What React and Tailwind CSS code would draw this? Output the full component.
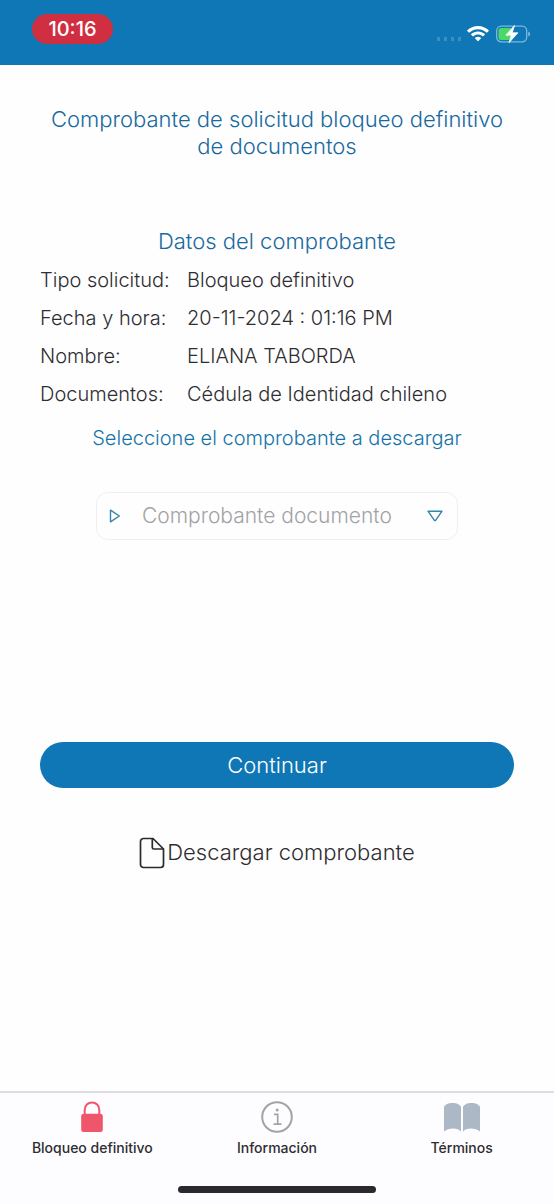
import { useState } from "react";

const details = [
  { label: "Tipo solicitud:", value: "Bloqueo definitivo" },
  { label: "Fecha y hora:", value: "20-11-2024 : 01:16 PM" },
  { label: "Nombre:", value: "ELIANA TABORDA" },
  { label: "Documentos:", value: "Cédula de Identidad chileno" },
];

const WifiIcon = () => (
  <svg viewBox="0 0 22 16" className="w-[22px] h-4" fill="#fff" aria-hidden="true">
    <path d="M11 0C6.900 0 3.100 1.600.3 4.300c-.2.2-.2.5 0 .7l1.500 1.500c.2.2.5.2.7 0C4.800 4.400 7.800 3.200 11 3.200s6.200 1.200 8.500 3.300c.2.2.5.2.7 0L21.700 5c.2-.2.2-.5 0-.7C18.900 1.600 15.100 0 11 0z" />
    <path d="M11 5.400c-2.600 0-5 1-6.800 2.600-.2.2-.2.5 0 .7l1.600 1.600c.2.2.5.2.7 0C7.700 9.200 9.300 8.600 11 8.600s3.300.6 4.500 1.700c.2.2.5.2.7 0l1.600-1.600c.2-.2.2-.5 0-.7C16 6.400 13.600 5.400 11 5.400z" />
    <path d="M11 10.700c-1.100 0-2.100.4-2.900 1-.2.2-.2.5 0 .7l2.500 2.700c.2.2.6.2.8 0l2.500-2.700c.2-.2.2-.5 0-.7-.8-.6-1.800-1-2.900-1z" />
  </svg>
);

const BatteryIcon = () => (
  <svg viewBox="0 0 36 20" className="w-9 h-5" aria-hidden="true">
    <rect x="1.700" y="2.200" width="30" height="15.600" rx="4.500" fill="none" stroke="#7db8dc" strokeWidth="1.300" />
    <rect x="3.500" y="4" width="13.500" height="12" rx="2.500" fill="#48d967" />
    <path d="M33.200 7.500c1.300.4 2 1.300 2 2.500s-.7 2.100-2 2.500z" fill="#7db8dc" />
    <path d="M19.500 1.500 10.800 11.200h5.600L14 18.700l8.900-9.900h-5.700z" fill="#fff" stroke="#fff" strokeWidth="0.800" strokeLinejoin="round" />
  </svg>
);

const FileIcon = () => (
  <svg viewBox="0 0 26 32" className="w-[26px] h-8" fill="none" stroke="#2b2a2d" strokeWidth="1.700" strokeLinejoin="round" aria-hidden="true">
    <path d="M4.500 1.500H14L24.500 12v15.500a3 3 0 0 1-3 3h-17a3 3 0 0 1-3-3v-23a3 3 0 0 1 3-3z" />
    <path d="M13.300 1.500v9a1.500 1.500 0 0 0 1.500 1.500h9.700" />
  </svg>
);

const LockIcon = () => (
  <svg viewBox="0 0 24 32" className="w-6 h-8" aria-hidden="true">
    <path d="M4.700 14V8.700a7.300 7.300 0 0 1 14.600 0V14" fill="none" stroke="#f0566b" strokeWidth="2" />
    <rect x="1.200" y="12.700" width="21.600" height="18.300" rx="2.500" fill="#f0566b" />
  </svg>
);

const InfoIcon = () => (
  <svg viewBox="0 0 32 32" className="w-8 h-8" fill="none" stroke="#a3a3a6" aria-hidden="true">
    <circle cx="16" cy="16" r="14.800" strokeWidth="2" />
    <path d="M13 13.300h3.700v9.400M12.500 23.200h8" strokeWidth="1.700" />
    <circle cx="16.200" cy="9" r="1.500" fill="#a3a3a6" stroke="none" />
  </svg>
);

const BookIcon = () => (
  <svg viewBox="0 0 36 32" className="w-9 h-8" fill="#acb8c6" aria-hidden="true">
    <path d="M0 6C1 3.500 4.500 2 8.500 2S16 3.500 17 6v24.500C15.500 28.500 12.500 27.500 9 27.500S2 28.500 0 30.500z" />
    <path d="M19 6c1-2.500 4.500-4 8.500-4S35 3.500 36 6v24.500c-2-2-5.500-3-9-3s-6.500 1-8 3z" />
  </svg>
);

const tabs = [
  { id: "bloqueo", label: "Bloqueo definitivo", Icon: LockIcon },
  { id: "informacion", label: "Información", Icon: InfoIcon },
  { id: "terminos", label: "Términos", Icon: BookIcon },
];

const StatusBar = () => (
  <header className="flex items-start justify-between h-[65px] pl-8 pr-[23px] bg-[#0f77b5]">
    <div className="flex items-center justify-center w-[81px] h-[30px] mt-[14px] rounded-full bg-[#d02f41] text-white text-xl font-medium">
      10:16
    </div>
    <div className="flex items-center gap-1.5 mt-6">
      <div className="flex gap-1 pt-2.5">
        <span className="w-[3px] h-1 bg-[#3a8fc5]" />
        <span className="w-[3px] h-1 bg-[#3a8fc5]" />
        <span className="w-[3px] h-1 bg-[#3a8fc5]" />
        <span className="w-[3px] h-1 bg-[#3a8fc5]" />
      </div>
      <WifiIcon />
      <BatteryIcon />
    </div>
  </header>
);

const App = () => {
  const [receipt, setReceipt] = useState("");

  return (
    <div className="flex flex-col min-h-screen bg-[#fefefe] font-['Inter',sans-serif] text-[#2e2d31]">
      <StatusBar />

      <main className="flex flex-col flex-1 px-10 pt-[41px] font-light">
        <h1 className="text-[22px] leading-[27px] text-center text-[#1769a0]">
          Comprobante de solicitud bloqueo definitivo de documentos
        </h1>

        <h2 className="mt-[68px] text-[22px] leading-[27px] text-center text-[#1769a0]">Datos del comprobante</h2>

        <dl className="grid grid-cols-[147px_1fr] gap-y-[10px] mt-[11px] text-xl leading-7">
          {details.map(({ label, value }) => (
            <div key={label} className="contents">
              <dt>{label}</dt>
              <dd>{value}</dd>
            </div>
          ))}
        </dl>

        <label htmlFor="receipt" className="mt-4 text-xl leading-7 text-center text-[#1774a8]">
          Seleccione el comprobante a descargar
        </label>

        {/* Icons share the grid row with the select */}
        <div className="grid grid-cols-[44px_1fr_44px] items-center h-12 mx-14 mt-10 border border-[#efeff2] rounded-xl">
          <select
            id="receipt"
            value={receipt}
            onChange={(e) => setReceipt(e.target.value)}
            className="col-span-3 col-start-1 row-start-1 w-full h-full px-[45px] appearance-none bg-transparent rounded-xl text-[21px] text-[#a3a2a6]"
          >
            <option value="">Comprobante documento</option>
            <option value="cedula">Cédula de Identidad chileno</option>
          </select>
          <svg viewBox="0 0 12 14" className="col-start-1 row-start-1 w-3 h-[14px] ml-3 pointer-events-none" fill="none" stroke="#3486a8" strokeWidth="1.400" strokeLinejoin="round" aria-hidden="true">
            <path d="M1.500 1.200v11.600L10.300 7z" />
          </svg>
          <svg viewBox="0 0 16 12" className="col-start-3 row-start-1 w-4 h-3 ml-3.5 pointer-events-none" fill="none" stroke="#3486a8" strokeWidth="1.400" strokeLinejoin="round" aria-hidden="true">
            <path d="M1 1.200h14L8.600 10.300q-.6.700-1.200 0z" />
          </svg>
        </div>

        <button type="button" className="h-[46px] mt-[202px] rounded-full bg-[#0f77b5] text-[22px] text-white">
          Continuar
        </button>

        <button type="button" className="flex items-center self-center gap-0.5 mt-12 text-[22px]">
          <FileIcon />
          Descargar comprobante
        </button>
      </main>

      <footer className="flex flex-col items-center justify-between h-[113px] pb-[11px] border-t-2 border-[#dddde2] bg-[#fdfcfe]">
        <nav className="grid grid-cols-3 w-full pt-2">
          {tabs.map(({ id, label, Icon }) => (
            <button key={id} type="button" className="flex flex-col items-center gap-[5px] text-sm font-medium">
              <Icon />
              {label}
            </button>
          ))}
        </nav>
        <div className="w-[198px] h-[7px] rounded-full bg-[#2b292e]" />
      </footer>
    </div>
  );
};

export default App;
